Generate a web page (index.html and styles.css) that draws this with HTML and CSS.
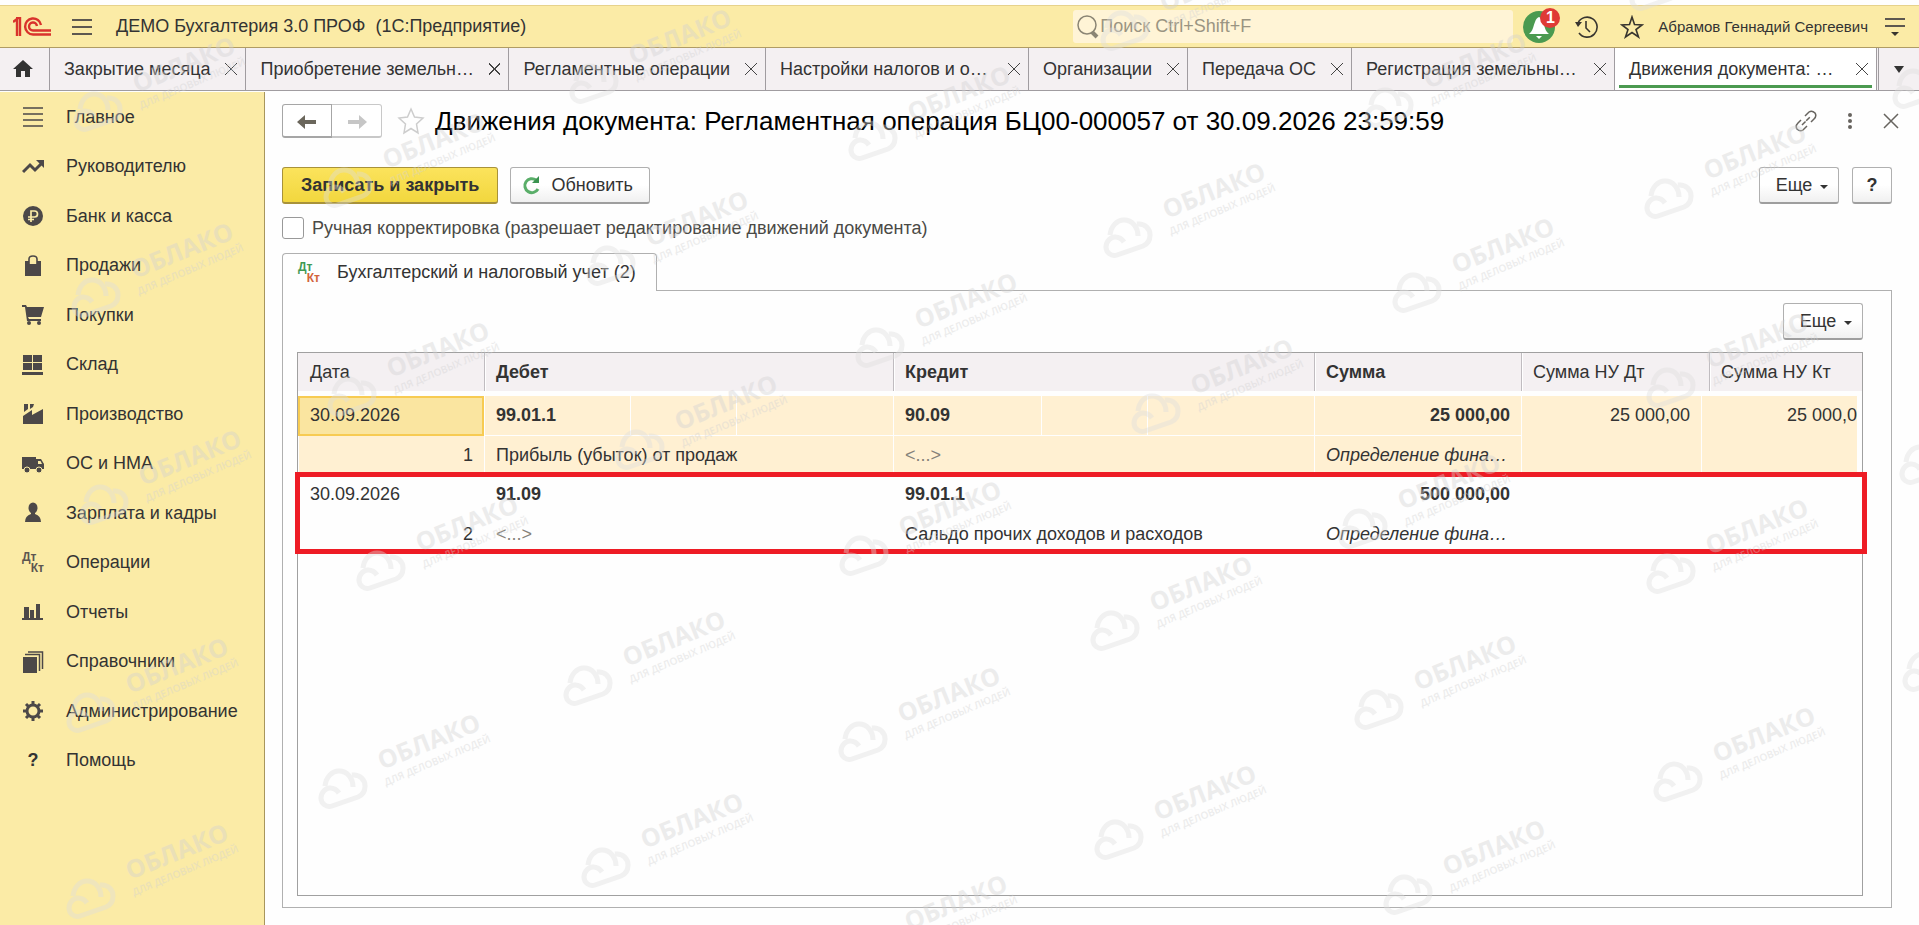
FILE: index.html
```html
<!DOCTYPE html>
<html lang="ru">
  <head>
    <meta charset="UTF-8" />
    <meta name="viewport" content="width=device-width, initial-scale=1.0" />
    <title>ДЕМО Бухгалтерия 3.0 ПРОФ</title>
    <link rel="stylesheet" href="styles.css">
  </head>
  <body>
    <!-- TOP BAR -->
    <header class="topbar">
      <svg class="logo" width="40" height="20" viewBox="0 0 40 20" fill="none" stroke="#d9332c" stroke-width="2.400">
        <path d="M0 5L4 2V19M3 1H7V19" />
        <path d="M28 8A8 8 0 1 0 20 17.500H38" />
        <path d="M24 9A4 4 0 1 0 20 13.500H38" />
      </svg>
      <button class="icon-btn burger" aria-label="Меню">
        <svg width="20" height="18" viewBox="0 0 20 18" stroke="#5d5850" stroke-width="2"><path d="M0 2H20M0 9H20M0 16H20" /></svg>
      </button>
      <span class="app-name">ДЕМО Бухгалтерия 3.0 ПРОФ&nbsp; (1С:Предприятие)</span>
      <div class="search">
        <svg width="22" height="24" viewBox="0 0 22 24" fill="none" stroke="#8b8574">
          <circle cx="10" cy="10" r="9" stroke-width="1.500" /><path d="M15 17L20 22" stroke-width="4" />
        </svg>
        <input type="text" placeholder="Поиск Ctrl+Shift+F" aria-label="Поиск" />
      </div>
      <div class="tools">
        <button class="icon-btn bell" aria-label="Уведомления">
          <svg width="34" height="34" viewBox="0 0 34 34">
            <circle cx="17" cy="17" r="16" fill="#4b9a50" />
            <path d="M7 24C11 21 11 17 13 12C14 9 15 8 17 7C19 8 20 9 21 12C23 17 23 21 27 24Z" fill="#fff" />
            <path d="M14 26H20L17 29Z" fill="#fff" />
          </svg>
          <span class="badge">1</span>
        </button>
        <button class="icon-btn" aria-label="История">
          <svg width="24" height="24" viewBox="0 0 24 24" fill="none" stroke="#38352f" stroke-width="1.600">
            <path d="M4 8A10 10 0 1 1 5 18" /><path d="M12 6V13L16 17" /><path d="M1 7H8L4 12Z" fill="#38352f" stroke="none" />
          </svg>
        </button>
        <button class="icon-btn" aria-label="Избранное">
          <svg width="24" height="24" viewBox="0 0 24 24" fill="none" stroke="#38352f" stroke-width="1.600">
            <path d="M12 2L14.500 9.500L22 10L16 14.500L18.500 22L12 17.500L5.500 22L8 14.500L2 10L9.500 9.500Z" />
          </svg>
        </button>
        <a class="user" href="#">Абрамов Геннадий Сергеевич</a>
        <button class="icon-btn" aria-label="Настройка панелей">
          <svg width="22" height="20" viewBox="0 0 22 20"><path d="M1 2H21M1 9H21" stroke="#5d5850" stroke-width="2" /><path d="M7 15H15L11 19Z" fill="#38352f" /></svg>
        </button>
      </div>
    </header>

    <!-- OPEN WINDOWS -->
    <nav class="tabs">
      <a class="home" href="#" aria-label="Начальная страница">
        <svg width="20" height="18" viewBox="0 0 20 18" fill="#333"><path d="M10 0L20 9H17V17H12V11H8V17H3V9H0Z" /></svg>
      </a>
      <div class="tab"><a href="#">Закрытие месяца</a><button class="close" aria-label="Закрыть"></button></div>
      <div class="tab wide"><a href="#">Приобретение земельн…</a><button class="close" aria-label="Закрыть"></button></div>
      <div class="tab"><a href="#">Регламентные операции</a><button class="close" aria-label="Закрыть"></button></div>
      <div class="tab wide"><a href="#">Настройки налогов и о…</a><button class="close" aria-label="Закрыть"></button></div>
      <div class="tab"><a href="#">Организации</a><button class="close" aria-label="Закрыть"></button></div>
      <div class="tab"><a href="#">Передача ОС</a><button class="close" aria-label="Закрыть"></button></div>
      <div class="tab wide"><a href="#">Регистрация земельны…</a><button class="close" aria-label="Закрыть"></button></div>
      <div class="tab wide active"><a href="#">Движения документа: …</a><button class="close" aria-label="Закрыть"></button></div>
      <button class="tabs-more" aria-label="Все окна"><span class="caret"></span></button>
    </nav>

    <div class="layout">
      <!-- SECTIONS -->
      <aside class="sidebar">
        <ul>
          <li><a href="#"><svg viewBox="0 0 22 22"><path d="M1 2H21M1 8H21M1 14H21M1 20H21" stroke="#4c4848" stroke-width="1.500" /></svg>Главное</a></li>
          <li><a href="#"><svg viewBox="0 0 22 22"><path d="M1 16L8 9L13 14L19 8" fill="none" stroke="#4c4848" stroke-width="3" /><path d="M14 4H22V12Z" /></svg>Руководителю</a></li>
          <li><a href="#"><svg viewBox="0 0 22 22"><circle cx="11" cy="11" r="10" /><path d="M9 17V6H12.500A3 3 0 0 1 12.500 12H6M6 14.500H12" fill="none" stroke="#fbeba6" stroke-width="1.700" /></svg>Банк и касса</a></li>
          <li><a href="#"><svg viewBox="0 0 22 22"><path d="M3 6H7V9H15V6H19V21H3Z" /><path d="M7 9V4Q7 1 11 1T15 4V9" fill="none" stroke="#4c4848" stroke-width="1.600" /></svg>Продажи</a></li>
          <li><a href="#"><svg viewBox="0 0 22 22"><path d="M0 1H4L5 3H22L19 13H6L7 15H19V17H5L3 3H0Z" /><circle cx="7" cy="19" r="2" /><circle cx="17" cy="19" r="2" /></svg>Покупки</a></li>
          <li><a href="#"><svg viewBox="0 0 22 22"><path d="M1 1H10V8H1ZM11 1H20V8H11ZM1 9H10V16H1ZM11 9H20V16H11ZM0 18H21V21H0Z" /></svg>Склад</a></li>
          <li><a href="#"><svg viewBox="0 0 22 22"><path d="M1 13L10 7V12L21 6V21H1ZM2 1H6V6L2 9ZM8 1H12L11 4L8 6Z" /></svg>Производство</a></li>
          <li><a href="#"><svg viewBox="0 0 22 22"><path d="M0 4H14V6H19L22 11V16H0Z" /><path d="M16 8H18.500L20 11H16Z" fill="#fbeba6" /><circle cx="5" cy="17" r="3" stroke="#fbeba6" /><circle cx="17" cy="17" r="3" stroke="#fbeba6" /></svg>ОС и НМА</a></li>
          <li><a href="#"><svg viewBox="0 0 22 22"><ellipse cx="11" cy="6" rx="4.500" ry="5.500" /><path d="M9 10H13V12Q19 14 19 20H3Q3 14 9 12Z" /></svg>Зарплата и кадры</a></li>
          <li><a href="#"><span class="dtkt"><b>Дт</b><b>Кт</b></span>Операции</a></li>
          <li><a href="#"><svg viewBox="0 0 22 22"><path d="M0 17H21V19H0ZM2 6H7V17H2ZM8 9H12V17H8ZM14 3H18V17H14Z" /></svg>Отчеты</a></li>
          <li><a href="#"><svg viewBox="0 0 22 22"><path d="M1 6H15V22H1Z" /><path d="M3 3.500H17.500V20M6 1H20.500V18" fill="none" stroke="#4c4848" stroke-width="1.500" /></svg>Справочники</a></li>
          <li><a href="#"><svg viewBox="0 0 22 22"><g fill="none" stroke="#4c4848" stroke-width="3"><circle cx="11" cy="11" r="6" /><path d="M11 1V5M11 17V21M1 11H5M17 11H21M4 4L7 7M15 15L18 18M4 18L7 15M15 7L18 4" /></g></svg>Администрирование</a></li>
          <li><a href="#"><span class="help-mark">?</span>Помощь</a></li>
        </ul>
      </aside>

      <main class="page">
        <div class="page-head">
          <div class="history-btns">
            <button aria-label="Назад"><svg width="20" height="14" viewBox="0 0 20 14"><path d="M0 7L8 0V5H19V9H8V14Z" fill="#6b675c" /></svg></button>
            <button aria-label="Вперед" disabled><svg width="20" height="14" viewBox="0 0 20 14"><path d="M20 7L12 0V5H1V9H12V14Z" fill="#c6c6c6" /></svg></button>
          </div>
          <button class="icon-btn" aria-label="В избранное">
            <svg width="28" height="28" viewBox="0 0 28 28" fill="none" stroke="#cdcdcd" stroke-width="1.500"><path d="M14 2L17.500 10L26 11L19.500 17L21 26L14 21.500L7 26L8.500 17L2 11L10.500 10Z" /></svg>
          </button>
          <h1>Движения документа: Регламентная операция БЦ00-000057 от 30.09.2026 23:59:59</h1>
          <div class="window-btns">
            <button class="icon-btn" aria-label="Ссылка">
              <svg width="22" height="22" viewBox="0 0 22 22" fill="none" stroke="#67645f" stroke-width="1.500">
                <path d="M10 6L14 2Q17 0 20 3Q22 6 19 9L16 12M12 16L8 20Q5 22 2 19Q0 16 3 13L6 10" /><path d="M7 15L15 7" stroke-dasharray="5 1" />
              </svg>
            </button>
            <button class="icon-btn" aria-label="Еще действия">
              <svg width="6" height="18" viewBox="0 0 6 18" fill="#67645f"><circle cx="3" cy="3" r="2" /><circle cx="3" cy="9" r="2" /><circle cx="3" cy="15" r="2" /></svg>
            </button>
            <button class="icon-btn" aria-label="Закрыть">
              <svg width="16" height="16" viewBox="0 0 16 16" stroke="#67645f" stroke-width="1.500"><path d="M1 1L15 15M15 1L1 15" /></svg>
            </button>
          </div>
        </div>

        <div class="commands">
          <button class="btn primary">Записать и закрыть</button>
          <button class="btn">
            <svg width="19" height="20" viewBox="0 0 19 20"><path d="M14 5A7 7 0 1 0 16 14" fill="none" stroke="#5aae69" stroke-width="3" /><path d="M10 8H17V1Z" fill="#3a9350" /></svg>
            Обновить
          </button>
          <div class="commands-right">
            <button class="btn more">Еще <span class="caret small"></span></button>
            <button class="btn help">?</button>
          </div>
        </div>

        <label class="manual"><input type="checkbox" />Ручная корректировка (разрешает редактирование движений документа)</label>

        <div class="register-tab">
          <span class="dtkt color"><b>Дт</b><b>Кт</b></span>
          <a href="#">Бухгалтерский и налоговый учет (2)</a>
        </div>

        <section class="register">
          <div class="register-bar"><button class="btn more">Еще <span class="caret small"></span></button></div>
          <div class="grid">
            <table>
              <colgroup>
                <col class="c-date" />
                <col class="c-deb1" /><col class="c-sub" /><col class="c-deb3" />
                <col class="c-cre1" /><col class="c-sub" /><col class="c-rest" />
                <col class="c-sum" /><col class="c-nu" /><col class="c-gap" /><col class="c-nu2" /><col class="c-edge" />
              </colgroup>
              <thead>
                <tr>
                  <th>Дата</th>
                  <th colspan="3" class="strong">Дебет</th>
                  <th colspan="3" class="strong">Кредит</th>
                  <th class="strong">Сумма</th>
                  <th colspan="2">Сумма НУ Дт</th>
                  <th colspan="2">Сумма НУ Кт</th>
                </tr>
              </thead>
              <tbody class="selected">
                <tr>
                  <td class="current">30.09.2026</td>
                  <td class="strong">99.01.1</td><td></td><td></td>
                  <td class="strong">90.09</td><td></td><td></td>
                  <td class="strong num">25 000,00</td>
                  <td class="num top" rowspan="2">25 000,00</td>
                  <td class="cut top" rowspan="2" colspan="2">25 000,00</td>
                  <td class="edge" rowspan="2"></td>
                </tr>
                <tr>
                  <td class="num">1</td>
                  <td colspan="3">Прибыль (убыток) от продаж</td>
                  <td colspan="3" class="empty">&lt;...&gt;</td>
                  <td class="note">Определение фина…</td>
                </tr>
              </tbody>
              <tbody>
                <tr>
                  <td>30.09.2026</td>
                  <td class="strong">91.09</td><td></td><td></td>
                  <td class="strong">99.01.1</td><td></td><td></td>
                  <td class="strong num">500 000,00</td>
                  <td rowspan="2"></td>
                  <td rowspan="2" colspan="2"></td>
                  <td rowspan="2"></td>
                </tr>
                <tr>
                  <td class="num">2</td>
                  <td colspan="3" class="empty">&lt;...&gt;</td>
                  <td colspan="3">Сальдо прочих доходов и расходов</td>
                  <td class="note">Определение фина…</td>
                </tr>
              </tbody>
            </table>
            <div class="highlight"></div>
          </div>
        </section>
      </main>
    </div>

    <!-- WATERMARK -->
    <svg class="watermark" aria-hidden="true">
      <defs>
        <g id="mark">
          <g fill="none" stroke="#dedede" stroke-width="5">
            <path d="M-18 -3C-17 -12 -11 -18 -4 -18C4 -18 10 -11 10 -2" />
            <path d="M9 -14C17 -15 22 -9 22 -3C22 2 20 6 15 8L-11 17C-17 19 -22 14 -22 9C-22 3 -17 -1 -13 -1C-9 -1 -6 1 -4 4" />
          </g>
          <text class="mark-name" transform="translate(39 -19) rotate(-22)">ОБЛАКО</text>
          <text class="mark-line" transform="translate(43 -3) rotate(-23)">ДЛЯ ДЕЛОВЫХ ЛЮДЕЙ</text>
        </g>
      </defs>
      <use href="#mark" x="98" y="112" />
      <use href="#mark" x="96" y="298" />
      <use href="#mark" x="104" y="505" />
      <use href="#mark" x="91" y="713" />
      <use href="#mark" x="91" y="899" />
      <use href="#mark" x="348" y="188" />
      <use href="#mark" x="352" y="397" />
      <use href="#mark" x="381" y="571" />
      <use href="#mark" x="343" y="789" />
      <use href="#mark" x="594" y="84" />
      <use href="#mark" x="611" y="266" />
      <use href="#mark" x="640" y="450" />
      <use href="#mark" x="588" y="686" />
      <use href="#mark" x="606" y="868" />
      <use href="#mark" x="873" y="141" />
      <use href="#mark" x="880" y="348" />
      <use href="#mark" x="864" y="556" />
      <use href="#mark" x="863" y="742" />
      <use href="#mark" x="870" y="950" />
      <use href="#mark" x="1125" y="31" />
      <use href="#mark" x="1128" y="238" />
      <use href="#mark" x="1156" y="414" />
      <use href="#mark" x="1115" y="631" />
      <use href="#mark" x="1119" y="840" />
      <use href="#mark" x="1389" y="108" />
      <use href="#mark" x="1417" y="293" />
      <use href="#mark" x="1363" y="529" />
      <use href="#mark" x="1379" y="710" />
      <use href="#mark" x="1408" y="895" />
      <use href="#mark" x="1654" y="-9" />
      <use href="#mark" x="1669" y="199" />
      <use href="#mark" x="1671" y="388" />
      <use href="#mark" x="1671" y="574" />
      <use href="#mark" x="1678" y="782" />
      <use href="#mark" x="1917" y="89" />
      <use href="#mark" x="1924" y="465" />
      <use href="#mark" x="1927" y="672" />
    </svg>
  </body>
</html>
```

FILE: styles.css
```css
* {
  box-sizing: border-box;
}
body {
  margin: 0;
  padding-top: 5px;
  height: 100vh;
  display: flex;
  flex-direction: column;
  overflow: hidden;
  position: relative;
  background: #fefefe;
  color: #333;
  font-family: "Liberation Sans", Arial, sans-serif;
  font-size: 18px;
}
a {
  color: inherit;
  text-decoration: none;
}
button {
  font: inherit;
  color: inherit;
  padding: 0;
}
.icon-btn {
  border: none;
  background: none;
  display: flex;
}

/* top bar */
.topbar {
  flex: none;
  display: flex;
  align-items: center;
  height: 43px;
  padding: 0 13px;
  background: #fbeba6;
  border-top: 1px solid #e6d28c;
  border-bottom: 1px solid #b09c64;
}
.burger {
  margin: 0 24px 0 19px;
}
.search {
  margin-left: auto;
  width: 440px;
  height: 33px;
  display: flex;
  align-items: center;
  padding-left: 4px;
  gap: 1px;
  background: #fff4d6;
  border-radius: 3px;
}
.search input {
  flex: 1;
  min-width: 0;
  border: none;
  padding: 0;
  background: none;
  font: inherit;
}
.search input::placeholder {
  color: #9a9482;
}
.tools {
  display: flex;
  align-items: center;
  margin-left: 9px;
}
.tools .icon-btn + .icon-btn {
  margin-left: 22px;
}
.tools .bell + .icon-btn {
  margin-left: 18px;
}
.bell {
  position: relative;
}
.badge {
  position: absolute;
  top: -2px;
  right: -4px;
  width: 20px;
  height: 20px;
  border-radius: 50%;
  background: #df3a35;
  color: #fff;
  font-size: 16px;
  line-height: 20px;
  font-weight: bold;
}
.user {
  margin: 0 16px 0 14px;
  font-size: 15px;
}

/* windows */
.tabs {
  flex: none;
  display: flex;
  height: 43px;
  background: #f4f0f2;
  border-bottom: 1px solid #a09ca0;
}
.home {
  width: 49px;
  display: flex;
  align-items: center;
  padding-left: 13px;
}
.tab {
  position: relative;
  display: flex;
  align-items: center;
  justify-content: space-between;
  gap: 15px;
  padding: 0 8px 0 14px;
  border-left: 1px solid #a09ca0;
  white-space: nowrap;
}
.tab.wide {
  width: 263px;
}
.tab.active {
  background: #fff;
  border-right: 1px solid #a09ca0;
}
.tab.active::after {
  content: "";
  position: absolute;
  left: 4px;
  right: 4px;
  bottom: 2px;
  height: 3px;
  background: #4b9a50;
}
.close {
  width: 12px;
  height: 12px;
  border: none;
  background: linear-gradient(45deg, transparent 46%, #444 46%, #444 54%, transparent 54%), linear-gradient(-45deg, transparent 46%, #444 46%, #444 54%, transparent 54%);
}
.tabs-more {
  flex: 1;
  margin-left: 1px;
  border: none;
  border-left: 1px solid #a09ca0;
  background: none;
}
.caret {
  display: inline-block;
  border: 5px solid transparent;
  border-top: 7px solid #333;
  border-bottom: none;
  vertical-align: middle;
}
.caret.small {
  border-width: 4px 4px 0;
  margin: 4px 0 0 6px;
}

/* sections */
.layout {
  flex: 1;
  min-height: 0;
  display: flex;
  padding-top: 1px;
}
.sidebar {
  flex: none;
  width: 265px;
  background: #fbeba6;
  border-right: 1px solid #a8965c;
}
.sidebar ul {
  list-style: none;
  margin: 0;
  padding: 0;
}
.sidebar a {
  display: flex;
  align-items: center;
  gap: 22px;
  height: 49px;
  padding-left: 22px;
}
.sidebar li:nth-child(odd) a {
  height: 50px;
}
.sidebar svg {
  width: 22px;
  height: 22px;
  fill: #4c4848;
}
.dtkt {
  display: flex;
  flex-direction: column;
  width: 22px;
  font-size: 12px;
  line-height: 11px;
  color: #5d5650;
}
.dtkt b:last-child {
  align-self: flex-end;
}
.dtkt.color b:first-child {
  color: #3f9a55;
}
.dtkt.color b:last-child {
  color: #d2653c;
}
.help-mark {
  width: 22px;
  text-align: center;
  font-weight: bold;
}

/* document */
.page {
  flex: 1;
  min-width: 0;
  display: flex;
  flex-direction: column;
  padding: 12px 27px 17px 17px;
}
.page-head {
  display: flex;
  align-items: center;
  height: 34px;
}
.history-btns {
  display: flex;
  margin-right: 15px;
}
.history-btns button {
  width: 50px;
  height: 34px;
  border: 1px solid #a6a6a6;
  border-bottom: 2px solid #a6a6a6;
  border-radius: 3px 0 0 3px;
  background: #fff;
}
.history-btns button + button {
  border-color: #c8c8c8;
  border-left: none;
  border-radius: 0 3px 3px 0;
}
.history-btns svg {
  display: block;
  margin: 3px auto 0;
}
h1 {
  margin: 0 0 0 10px;
  font-size: 26px;
  font-weight: normal;
  line-height: 32px;
  color: #000;
  white-space: nowrap;
}
.window-btns {
  margin-left: auto;
  display: flex;
  align-items: center;
  gap: 30px;
  margin-right: -7px;
}
.commands {
  display: flex;
  align-items: center;
  gap: 12px;
  margin-top: 29px;
}
.commands-right {
  margin-left: auto;
  display: flex;
  gap: 13px;
}
.btn {
  display: flex;
  align-items: center;
  justify-content: center;
  gap: 10px;
  height: 37px;
  padding: 0 16px 0 11px;
  border: 1px solid #b0b0b0;
  border-bottom: 2px solid #9e9e9e;
  border-radius: 3px;
  background: linear-gradient(#fff 50%, #f0f0f0);
}
.btn.primary {
  padding: 0 18px;
  font-weight: bold;
  border-color: #a8923a;
  background: linear-gradient(#fbe35c, #f2d73e);
}
.btn.more {
  width: 80px;
  padding: 0 8px 0 14px;
  gap: 2px;
}
.btn.help {
  width: 40px;
  padding: 0;
  font-weight: bold;
}
.manual {
  display: flex;
  align-items: center;
  gap: 8px;
  margin-top: 13px;
  color: #4a4a46;
}
.manual input {
  appearance: none;
  width: 22px;
  height: 22px;
  margin: 0;
  border: 1px solid #999;
  border-radius: 3px;
  background: #fff;
}

/* register */
.register-tab {
  position: relative;
  align-self: flex-start;
  display: flex;
  align-items: center;
  gap: 17px;
  height: 38px;
  margin: 14px 0 -1px;
  padding: 0 20px 0 15px;
  border: 1px solid #b0b0b0;
  border-bottom: none;
  border-radius: 4px 4px 0 0;
  background: #fefefe;
}
.register {
  flex: 1;
  display: flex;
  flex-direction: column;
  padding: 12px 28px 11px 14px;
  border: 1px solid #b0b0b0;
}
.register-bar {
  display: flex;
  justify-content: flex-end;
  margin-bottom: 12px;
}
.grid {
  position: relative;
  flex: 1;
  border: 1px solid #a0a0a0;
}
table {
  width: 100%;
  table-layout: fixed;
  border-spacing: 0;
}
.c-date { width: 186px; }
.c-deb1 { width: 146px; }
.c-deb3 { width: 157px; }
.c-cre1 { width: 148px; }
.c-sub { width: 106px; }
.c-sum { width: 207px; }
.c-nu { width: 180px; }
.c-gap { width: 8px; }
.c-nu2 { width: 148px; }
.c-edge { width: 5px; }
th,
td {
  height: 40px;
  padding: 0 11px;
  overflow: hidden;
  white-space: nowrap;
  text-align: left;
  font-weight: normal;
}
th {
  height: 43px;
  padding: 1px 12px 0;
  border-bottom: 5px solid #fefefe;
  background: #f4f0f2;
  box-shadow: inset 1px 0 #c0bcc0, inset 2px 0 #fff;
}
th:first-child {
  box-shadow: none;
}
tr:nth-child(2) td {
  height: 39px;
}
td {
  border-left: 1px solid transparent;
  border-bottom: 1px solid transparent;
}
.selected td {
  border-color: #fefefe;
  background: #fff0d2;
}
.selected .current {
  border: 2px solid #f7cb52;
  padding: 0 10px 2px;
  background: #fae5a0;
}
.selected .edge {
  padding: 0;
  background: none;
}
.strong {
  font-weight: bold;
}
.num {
  text-align: right;
}
.top {
  vertical-align: top;
  line-height: 38px;
}
.cut {
  padding: 0 0 0 85px;
}
.empty {
  color: #85827a;
}
.note {
  font-style: italic;
}
.highlight {
  position: absolute;
  top: 119px;
  left: -3px;
  right: -5px;
  height: 82px;
  border: 5px solid #ee1c25;
}

.watermark {
  position: absolute;
  top: 0;
  left: 0;
  width: 100%;
  height: 100%;
  opacity: 0.4;
  pointer-events: none;
}
.mark-name {
  font: bold 25px "Open Sans", sans-serif;
  fill: #d2d2d2;
}
.mark-line {
  font: 600 10px "Open Sans", sans-serif;
  fill: #d2d2d2;
}
```
